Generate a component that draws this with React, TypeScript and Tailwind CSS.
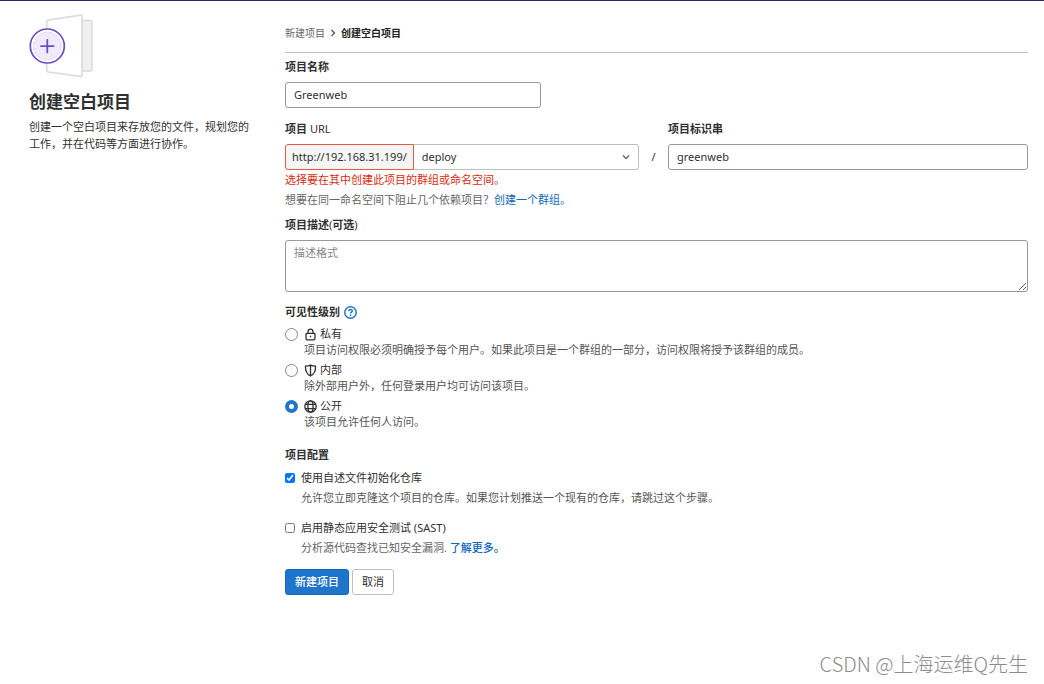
import type { ReactNode } from "react";

const visibilityLevels = [
  {
    value: "private",
    label: "私有",
    help: "项目访问权限必须明确授予每个用户。如果此项目是一个群组的一部分，访问权限将授予该群组的成员。",
    icon: (
      <path d="M5 6.500V4.500a3 3 0 0 1 6 0v2M3.500 6.500h9a1 1 0 0 1 1 1v5.500a1.500 1.500 0 0 1-1.500 1.500H4A1.500 1.500 0 0 1 2.500 13V7.500a1 1 0 0 1 1-1zM8 9.500v2" />
    ),
  },
  {
    value: "internal",
    label: "内部",
    help: "除外部用户外，任何登录用户均可访问该项目。",
    icon: <path d="M8 1.500v13M1.800 2.600C4 2.500 6 2.100 8 1.300c2 .8 4 1.200 6.200 1.300.3 6-1.700 10-6.200 12.200C3.500 12.600 1.500 8.600 1.800 2.600z" />,
  },
  {
    value: "public",
    label: "公开",
    help: "该项目允许任何人访问。",
    icon: (
      <>
        <circle cx="8" cy="8" r="7" />
        <ellipse cx="8" cy="8" rx="3.200" ry="7" />
        <path d="M1.500 5.500h13M1.500 10.500h13" />
      </>
    ),
  },
];

const inputClass =
  "block h-[26px] w-full rounded-[3px] border border-[#999] bg-white px-2 pb-[2px] text-[11px] text-[#303030] outline-none focus:border-[#1f75cb]";
const linkClass = "text-[#1068bf] hover:underline";

function FieldLabel({ htmlFor, children }: { htmlFor: string; children: ReactNode }) {
  return (
    <label htmlFor={htmlFor} className="mb-[7px] block font-semibold">
      {children}
    </label>
  );
}

function ProjectIllustration() {
  return (
    <svg className="block h-16 w-16" viewBox="0 0 64 64" fill="none" aria-hidden="true">
      <path d="M53 6.500h8.500a1.500 1.500 0 0 1 1.500 1.500v47.500a1.500 1.500 0 0 1-1.500 1.500H53z" fill="#f0f0f0" stroke="#dcdcdc" strokeWidth="1.500" />
      <path
        d="M19 6.200 51.300 1.100a1.500 1.500 0 0 1 1.700 1.500v58.300a1.500 1.500 0 0 1-1.700 1.500L19 58a1.500 1.500 0 0 1-1.300-1.500V7.700A1.500 1.500 0 0 1 19 6.200z"
        fill="#fff"
        stroke="#dcdcdc"
        strokeWidth="1.700"
      />
      <circle cx="18.300" cy="32" r="17" fill="#fff" stroke="#6e49cb" strokeWidth="1.700" />
      <circle cx="18.300" cy="32" r="13.800" fill="#f0ebfb" stroke="#d5c8f3" strokeWidth="0.800" strokeDasharray="4 1.500" />
      <path d="M18.300 25.800v12.600M12 32.100h12.600" stroke="#6e49cb" strokeWidth="1.800" strokeLinecap="round" />
    </svg>
  );
}

export default function App() {
  return (
    <div className="relative min-h-screen border-t border-[#292961] bg-white font-['Noto_Sans','Noto_Sans_CJK_SC',sans-serif] text-[11px] leading-4 text-[#303030]">
      <div className="flex pr-4 pl-[29px]">
        <aside className="w-64 shrink-0 pt-[13px] pr-8">
          <ProjectIllustration />
          <h1 className="mt-3 text-[17px] leading-6 font-bold">创建空白项目</h1>
          <p className="mt-1 leading-[17px]">
            创建一个空白项目来存放您的文件，规划您的工作，并在代码等方面进行协作。
          </p>
        </aside>

        <main className="min-w-0 flex-1 pt-6">
          <nav className="flex items-center border-b border-[#bfbfbf] pb-[11px] text-[10px]" aria-label="面包屑">
            <a href="#" className="text-[#666] hover:underline">
              新建项目
            </a>
            <svg className="mx-1 h-2 w-2" viewBox="0 0 8 8" fill="none" stroke="#555" strokeWidth="1.300" aria-hidden="true">
              <path d="m2.500 1 3 3-3 3" />
            </svg>
            <a href="#" className="font-semibold text-[#222] hover:underline">
              创建空白项目
            </a>
          </nav>

          <form className="pt-[6px]" onSubmit={(e) => e.preventDefault()}>
            <div className="w-64 max-w-full">
              <FieldLabel htmlFor="name">项目名称</FieldLabel>
              <input id="name" className={inputClass} defaultValue="Greenweb" />
            </div>

            <div className="mt-[13px] grid grid-cols-[354fr_29px_360fr]">
              <div className="min-w-0">
                <FieldLabel htmlFor="namespace">
                  项目 <span className="font-normal">URL</span>
                </FieldLabel>
                <div className="flex h-[26px]">
                  <span className="flex items-center rounded-l-[3px] border border-[#ec5941] bg-[#f5f5f5] px-[6px] pb-px">
                    http://192.168.31.199/
                  </span>
                  <div className="relative min-w-0 flex-1">
                    <select
                      id="namespace"
                      className="block h-full w-full appearance-none rounded-r-[3px] border border-l-0 border-[#bfbfbf] bg-white px-2 pb-px text-[11px]"
                      defaultValue="deploy"
                    >
                      <option value="deploy">deploy</option>
                    </select>
                    <svg className="pointer-events-none absolute top-2 right-2 h-[10px] w-[10px]" viewBox="0 0 10 10" fill="none" stroke="#666" strokeWidth="1.400" aria-hidden="true">
                      <path d="m2 3.500 3 3 3-3" />
                    </svg>
                  </div>
                </div>
              </div>
              <div className="self-end text-center leading-[26px]">/</div>
              <div className="min-w-0">
                <FieldLabel htmlFor="slug">项目标识串</FieldLabel>
                <input id="slug" className={inputClass} defaultValue="greenweb" />
              </div>
            </div>
            <p className="mt-[2px] text-[#dd2b0e]">选择要在其中创建此项目的群组或命名空间。</p>
            <p className="mt-1 text-[#666]">
              想要在同一命名空间下阻止几个依赖项目？
              <a href="#" className={linkClass}>
                创建一个群组。
              </a>
            </p>

            <div className="mt-[9px]">
              <FieldLabel htmlFor="description">
                项目描述<span className="font-normal">(</span>可选<span className="font-normal">)</span>
              </FieldLabel>
              <textarea
                id="description"
                className="block h-[52px] w-full rounded-[3px] border border-[#999] bg-white px-2 py-1 placeholder:text-[#868686]"
                placeholder="描述格式"
              />
            </div>

            <fieldset className="mt-3">
              <legend className="flex items-center gap-1 font-semibold">
                可见性级别
                <a href="#" aria-label="帮助">
                  <svg className="h-[13px] w-[13px]" viewBox="0 0 16 16" fill="none" stroke="#1f75cb" strokeWidth="1.800">
                    <circle cx="8" cy="8" r="7.100" />
                    <path d="M5.800 6.400C5.800 5.100 6.800 4.400 8 4.400s2.200.7 2.200 1.800C10.200 7.600 8 7.700 8 9.300M8 10.600v1.800" />
                  </svg>
                </a>
              </legend>
              <div className="mt-[6px] flex flex-col gap-1">
                {visibilityLevels.map((level) => (
                  <div key={level.value}>
                    <label className="flex items-center">
                      <input
                        type="radio"
                        name="visibility"
                        value={level.value}
                        defaultChecked={level.value === "public"}
                        className="h-[13px] w-[13px] appearance-none rounded-full border border-[#868686] bg-white checked:border-4 checked:border-[#1f75cb]"
                      />
                      <svg className="mr-[3px] ml-[6px] h-[13px] w-[13px]" viewBox="0 0 16 16" fill="none" stroke="#303030" strokeWidth="1.600" aria-hidden="true">
                        {level.icon}
                      </svg>
                      {level.label}
                    </label>
                    <p className="pl-[19px] text-[#555]">{level.help}</p>
                  </div>
                ))}
              </div>
            </fieldset>

            <fieldset className="mt-[17px]">
              <legend className="font-semibold">项目配置</legend>
              <div className="mt-[7px]">
                <label className="flex items-center gap-[6px]">
                  <input type="checkbox" defaultChecked className="h-[10px] w-[10px]" />
                  使用自述文件初始化仓库
                </label>
                <p className="mt-1 pl-4 text-[#555]">
                  允许您立即克隆这个项目的仓库。如果您计划推送一个现有的仓库，请跳过这个步骤。
                </p>
              </div>
              <div className="mt-[14px]">
                <label className="flex items-center gap-[6px]">
                  <input type="checkbox" className="h-[10px] w-[10px]" />
                  启用静态应用安全测试 (SAST)
                </label>
                <p className="mt-1 pl-4 text-[#666]">
                  分析源代码查找已知安全漏洞.{" "}
                  <a href="#" className={`font-medium ${linkClass}`}>
                    了解更多。
                  </a>
                </p>
              </div>
            </fieldset>

            <div className="mt-[13px] flex gap-[3px]">
              <button type="submit" className="h-[26px] rounded-[3px] border border-[#1068bf] bg-[#1f75cb] px-[9px] font-medium text-white">
                新建项目
              </button>
              <button type="button" className="h-[26px] rounded-[3px] border border-[#bfbfbf] bg-white px-[9px]">
                取消
              </button>
            </div>
          </form>
        </main>
      </div>

      <div className="absolute right-4 bottom-1 font-['Noto_Sans_CJK_SC',sans-serif] text-[20px] leading-8 font-light text-[#8c8c8c]">
        CSDN @上海运维Q先生
      </div>
    </div>
  );
}
